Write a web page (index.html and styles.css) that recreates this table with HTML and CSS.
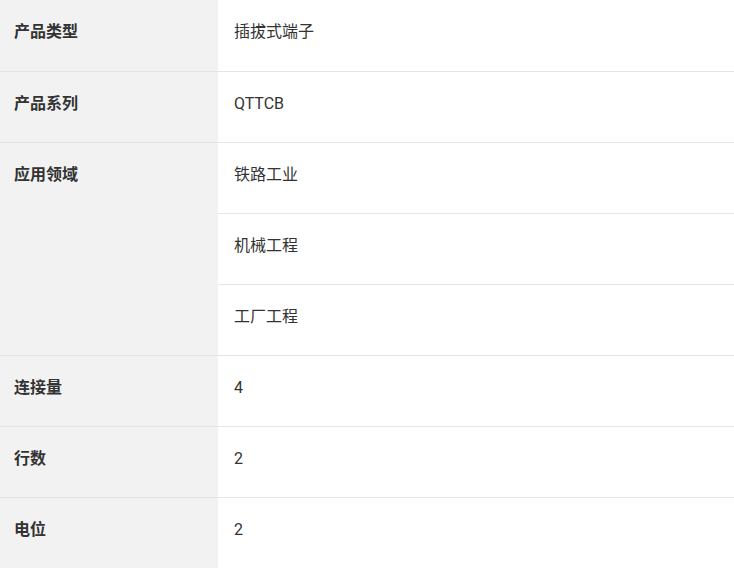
FILE: index.html
```html
<!DOCTYPE html>
<html lang="zh">
<head>
<meta charset="utf-8">
<link rel="stylesheet" href="styles.css">
</head>
<body>
<table class="spec">
  <tr><th>产品类型</th><td>插拔式端子</td></tr>
  <tr><th>产品系列</th><td>QTTCB</td></tr>
  <tr><th rowspan="3">应用领域</th><td>铁路工业</td></tr>
  <tr><td>机械工程</td></tr>
  <tr><td>工厂工程</td></tr>
  <tr><th>连接量</th><td>4</td></tr>
  <tr><th>行数</th><td>2</td></tr>
  <tr><th>电位</th><td>2</td></tr>
</table>
</body>
</html>
```
FILE: styles.css
```css
html, body {
  margin: 0;
  padding: 0;
  background: #fff;
}
.spec {
  width: 734px;
  border-collapse: collapse;
  font-family: Roboto, "Noto Sans CJK SC", sans-serif;
  font-size: 16px;
  color: #333;
}
.spec th, .spec td {
  height: 71px;
  box-sizing: border-box;
  padding: 21px 16px 0 14px;
  line-height: 22px;
  vertical-align: top;
  text-align: left;
  border-bottom: 1px solid #e4e4e9;
}
.spec th {
  width: 218px;
  background: #f2f2f2;
  font-weight: bold;
}
.spec td {
  padding-left: 16px;
  font-weight: normal;
}
```
